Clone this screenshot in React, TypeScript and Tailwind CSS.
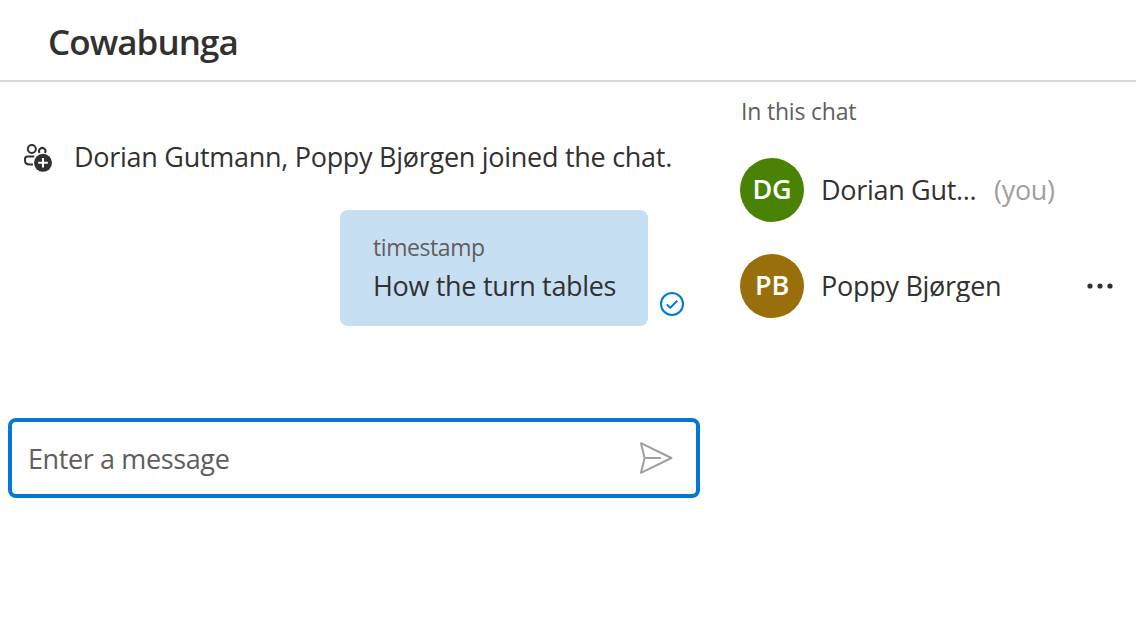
import React from "react";

function PeopleAddIcon() {
  return (
    <svg width="30" height="30" viewBox="0 0 30 30" fill="none" className="mt-[7px] shrink-0">
      <g stroke="#323130" strokeWidth="2">
        <circle cx="8.8" cy="6" r="4" />
        <path d="M16.6 10a3.2 3.2 0 1 1 5.3 0" />
        <path d="M11.3 13.6H4.5a2.5 2.5 0 0 0-2.5 2.5v1.2c0 2.8 2 4.2 4.6 4.2H10" />
      </g>
      <circle cx="20" cy="19.8" r="9" fill="#323130" />
      <path d="M20 15v9.6M15.2 19.8h9.6" stroke="#fff" strokeWidth="2" />
    </svg>
  );
}

function SeenIcon() {
  return (
    <svg width="24" height="24" viewBox="0 0 24 24" fill="none" stroke="#0078d4" strokeWidth="2">
      <circle cx="12" cy="12" r="11" />
      <path d="M6.8 12.4l3.5 3.3 7-7" />
    </svg>
  );
}

function SendIcon() {
  return (
    <svg width="36" height="36" viewBox="0 0 36 36" fill="none" stroke="#a19f9d" strokeWidth="2">
      <path strokeLinejoin="round" d="M3 3.2L33.4 18 3 32.8 6.6 18Z" />
      <path d="M6.6 18H23" />
    </svg>
  );
}

function MoreIcon() {
  return (
    <svg width="26" height="6" viewBox="0 0 26 6" fill="#323130">
      <circle cx="3" cy="3" r="2.6" />
      <circle cx="13" cy="3" r="2.6" />
      <circle cx="23" cy="3" r="2.6" />
    </svg>
  );
}

function Avatar({ initials, color }: { initials: string; color: string }) {
  return (
    <div className={`flex h-16 w-16 shrink-0 items-center justify-center rounded-full pb-px text-[27px] font-semibold tracking-[-0.3px] text-white ${color}`}>
      {initials}
    </div>
  );
}

export default function App() {
  return (
    <div className="h-[640px] w-[1136px] overflow-hidden bg-white font-['Open_Sans','Noto_Sans',sans-serif] text-[#323130]">
      <header className="flex h-[82px] items-center border-b-2 border-[#dadada] pl-12 pt-0.5">
        <h1 className="text-[35px] font-semibold leading-none tracking-[-0.95px]">Cowabunga</h1>
      </header>
      <div className="flex">
        <main className="flex w-[708px] flex-col pt-[54px]">
          <div className="flex h-[42px] pl-[23px]">
            <PeopleAddIcon />
            <p className="ml-[21px] whitespace-nowrap text-[27px] leading-[42px] tracking-[-0.28px]">
              Dorian Gutmann, Poppy Bjørgen joined the chat.
            </p>
          </div>
          <div className="mt-8 ml-[340px] flex items-end">
            <div className="h-[116px] w-[308px] whitespace-nowrap rounded-lg bg-[#c7dff3] pl-[33px] pt-[21px]">
              <div className="text-[23px] leading-8 tracking-[-0.42px] text-[#605e5c]">timestamp</div>
              <div className="mt-1 text-[27px] leading-[38px] tracking-[-0.32px]">How the turn tables</div>
            </div>
            <div className="mb-[10px] ml-3">
              <SeenIcon />
            </div>
          </div>
          <div className="mt-[92px] ml-2 flex h-20 w-[692px] items-center justify-between rounded-lg border-4 border-[#0078d4] pl-4 pr-[22px]">
            <span className="pt-0.5 text-[27px] leading-[38px] tracking-[-0.38px] text-[#605e5c]">Enter a message</span>
            <SendIcon />
          </div>
        </main>
        <aside className="w-[428px] pl-8 pt-[13px]">
          <h2 className="pl-px text-[23px] leading-8 tracking-[-0.2px] text-[#605e5c]">In this chat</h2>
          <ul className="mt-[31px] flex flex-col gap-8">
            <li className="flex items-center">
              <Avatar initials="DG" color="bg-[#498205]" />
              <span className="ml-[17px] w-[173px] whitespace-nowrap text-[27px] leading-8 tracking-[-0.31px]">Dorian Gut...</span>
              <span className="text-[27px] leading-8 tracking-[-0.3px] text-[#a19f9d]">(you)</span>
            </li>
            <li className="flex items-center">
              <Avatar initials="PB" color="bg-[#986f0b]" />
              <span className="ml-[17px] w-[266px] overflow-hidden whitespace-nowrap text-[27px] leading-8 tracking-[-0.28px]">Poppy Bjørgen</span>
              <MoreIcon />
            </li>
          </ul>
        </aside>
      </div>
    </div>
  );
}
